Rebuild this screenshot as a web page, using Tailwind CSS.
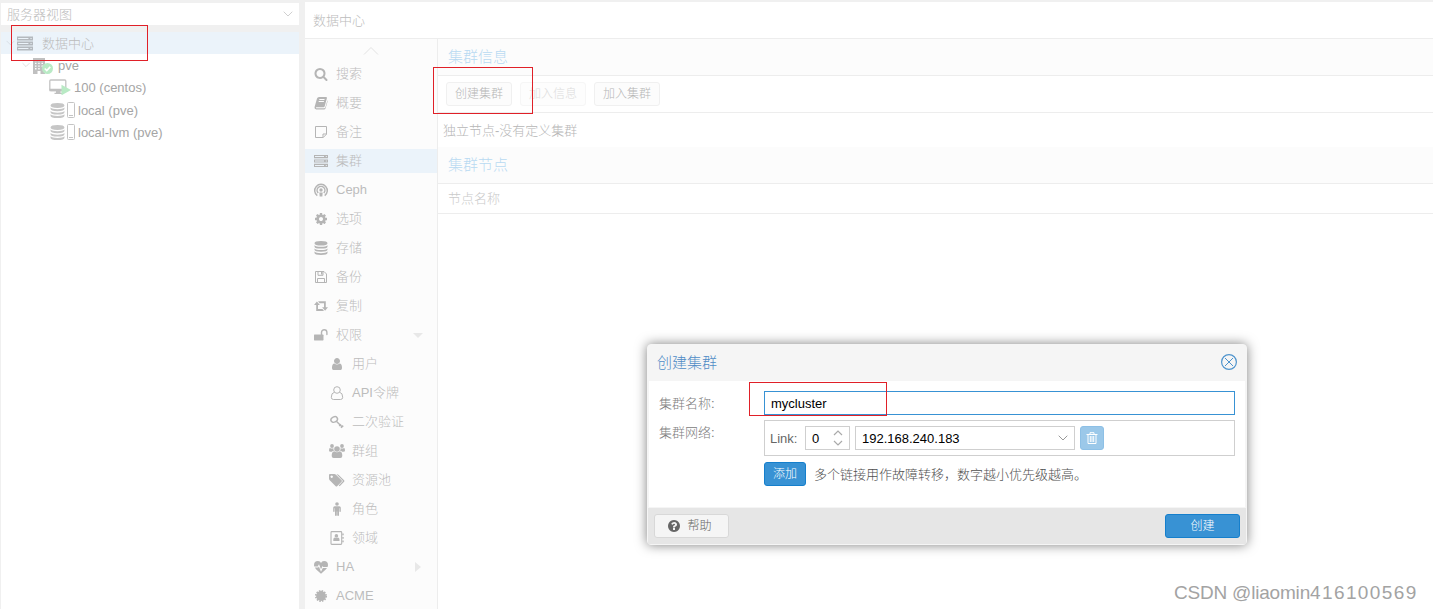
<!DOCTYPE html>
<html lang="zh-CN">
<head>
  <meta charset="UTF-8" />
  <meta name="viewport" content="width=device-width, initial-scale=1" />
  <title>数据中心</title>
  <script src="https://cdn.jsdelivr.net/npm/@tailwindcss/browser@4"></script>
</head>
<body class="relative h-screen overflow-hidden bg-[#f0f0f0] font-['Liberation_Sans','Noto_Sans_CJK_SC',sans-serif] text-[13px] leading-none font-light text-[#bcbcbc]">

  <!-- icon sprite -->
  <svg class="hidden">
    <symbol id="search" viewBox="0 0 1792 1792"><path d="M1216 832q0-185-131.5-316.5t-316.5-131.5-316.5 131.5-131.5 316.5 131.5 316.5 316.5 131.5 316.5-131.5 131.5-316.5zm512 832q0 52-38 90t-90 38q-54 0-90-38l-343-342q-179 124-399 124-143 0-273.5-55.5t-225-150-150-225-55.5-273.5 55.5-273.5 150-225 225-150 273.5-55.5 273.5 55.5 225 150 150 225 55.5 273.5q0 220-124 399l343 343q37 37 37 90z"/></symbol>
    <symbol id="user" viewBox="0 0 1792 1792"><path d="M1536 1399q0 109-62.5 187t-150.5 78h-854q-88 0-150.5-78t-62.5-187q0-85 8.5-160.5t31.5-152 58.5-131 94-89 134.5-34.5q131 128 313 128t313-128q76 0 134.5 34.5t94 89 58.5 131 31.5 152 8.5 160.5zm-256-887q0 159-112.5 271.5t-271.5 112.5-271.5-112.5-112.5-271.5 112.5-271.5 271.5-112.5 271.5 112.5 112.5 271.5z"/></symbol>
    <symbol id="database" viewBox="0 0 14 14"><path d="M.5 2.300Q.5 0 7 0t6.500 2.300T7 4.600.5 2.300zM.5 4.200Q2 5.800 7 5.800t6.500-1.600v1.200Q13.500 7.600 7 7.600T.5 5.400zM.5 7.400Q2 9 7 9t6.500-1.600v1.200q0 2.200-6.500 2.200T.5 8.600zM.5 10.600Q2 12.200 7 12.200t6.500-1.600v1.200Q13.500 14 7 14T.5 11.800z"/></symbol>
    <symbol id="cog" viewBox="0 0 1792 1792"><path d="M1152 896q0-106-75-181t-181-75-181 75-75 181 75 181 181 75 181-75 75-181zm512-109v222q0 12-8 23t-20 13l-185 28q-19 54-39 91 35 50 107 138 10 12 10 25t-9 23q-27 37-99 108t-94 71q-12 0-26-9l-138-108q-44 23-91 38-16 136-29 186-7 28-36 28h-222q-14 0-24.5-8.5t-11.5-21.5l-28-184q-49-16-90-37l-141 107q-10 9-25 9-14 0-25-11-126-114-165-168-7-10-7-23 0-12 8-23 15-21 51-66.5t54-70.5q-27-50-41-99l-183-27q-13-2-21-12.5t-8-23.5v-222q0-12 8-23t19-13l186-28q14-46 39-92-40-57-107-138-10-12-10-24 0-10 9-23 26-36 98.5-107.5t94.5-71.5q13 0 26 10l138 107q44-23 91-38 16-136 29-186 7-28 36-28h222q14 0 24.5 8.5t11.5 21.5l28 184q49 16 90 37l142-107q9-9 24-9 13 0 25 10 129 119 165 170 7 8 7 22 0 12-8 23-15 21-51 66.5t-54 70.5q26 50 41 98l183 28q13 2 21 12.5t8 23.5z"/></symbol>
    <symbol id="question" viewBox="0 0 1792 1792"><path d="M1024 1376v-192q0-14-9-23t-23-9h-192q-14 0-23 9t-9 23v192q0 14 9 23t23 9h192q14 0 23-9t9-23zm256-672q0-88-55.5-163t-138.5-116-170-41q-243 0-371 213-15 24 8 42l132 100q7 6 19 6 16 0 25-12 53-68 86-92 34-24 86-24 48 0 85.5 26t37.500 59q0 38-20 61t-68 45q-63 28-115.5 86.5t-52.500 125.500v36q0 14 9 23t23 9h192q14 0 23-9t9-23q0-19 21.500-49.500t54.500-49.500q32-18 49-28.500t46-35 44.500-48 28-60.500 12.500-81zm384 192q0 209-103 385.500t-279.500 279.500-385.500 103-385.500-103-279.500-279.500-103-385.500 103-385.500 279.500-279.500 385.500-103 385.500 103 279.500 279.500 103 385.500z"/></symbol>
    <symbol id="book" viewBox="0 0 14 14"><path d="M5 1h7q1.200 0 .9 1.200L10.700 10.300q-.3.900-1.300.9H2.500q-.8 0-.6.500t.9.500H10.200q.8 0 1.100-.8L13.600 4V5.500l-2 6.700q-.4 1.300-1.700 1.300H2.300Q.3 13.300.5 11.300L3 2.500Q3.500 1 5 1z"/><path d="M5.300 3.500h5.200M4.700 5.500h5.200" stroke="#fcfcfc"/></symbol>
    <symbol id="note" viewBox="0 0 14 14"><path d="M1.500 1.500h11v7.700l-3.300 3.300H1.500zM12.500 9H9v3.500" fill="none" stroke="currentColor"/></symbol>
    <symbol id="server" viewBox="0 0 14 14"><path fill-rule="evenodd" d="M0 1h14v3.200H0zM1 2.100v1h9v-1zM11.800 2.100v1h1v-1zM0 5.400h14v3.200H0zM1 6.500v1h9v-1zM11.800 6.500v1h1v-1zM0 9.800h14V13H0zM1 10.900v1h9v-1zM11.800 10.900v1h1v-1z"/></symbol>
    <symbol id="ceph" viewBox="0 0 14 14"><g fill="none" stroke="currentColor" stroke-width="1.500"><path d="M3.300 12.700A6.300 6.300 0 1 1 10.700 12.700M4.200 10A3.900 3.900 0 1 1 9.800 10"/></g><circle cx="7" cy="7" r="1.700"/><path d="M5.300 9.500h3.400L8.300 13.500H5.700z"/></symbol>
    <symbol id="save" viewBox="0 0 14 14"><path d="M1.500 1.500h8.500l2.500 2.500v8.500h-11zM4 1.500v3.800h5V1.500M3.500 12.500V8.500h7v4" fill="none" stroke="currentColor"/><path d="M7 2h1.500v2.500H7z"/></symbol>
    <symbol id="retweet" viewBox="0 0 14 14"><path d="M2.900 2.500 5.900 6H4v4h4.500l1.500 1.900H2.200V6H0zM11.100 11.700 8.100 8.200H10v-4H5.500L4 2.300h7.800v5.900H14z"/></symbol>
    <symbol id="unlock" viewBox="0 0 14 14"><path d="M.5 6.500h8.300q.7 0 .7.700v4.600q0 .7-.7.700H.5q-.5 0-.5-.7V7.200q0-.7.500-.7z"/><path d="M7.500 6.700V4.500a2.700 2.700 0 0 1 5.400 0v2" fill="none" stroke="currentColor" stroke-width="1.400" stroke-linecap="round"/></symbol>
    <symbol id="user-o" viewBox="0 0 14 14"><g fill="none" stroke="currentColor"><circle cx="7" cy="4" r="3.300"/><path d="M4.300 6.300Q1.300 6.800 1.300 11.300 1.300 13.500 3.500 13.500h7q2.200 0 2.200-2.200 0-4.500-3-5"/></g></symbol>
    <symbol id="key" viewBox="0 0 14 14"><g fill="none" stroke="currentColor" stroke-width="1.500"><ellipse cx="4.200" cy="4.500" rx="3.400" ry="2.600" transform="rotate(-25 4.200 4.500)"/><path d="M6.300 6.300 12.300 12M9.200 11l1.700-1.700M11 12.800l2.200-2.200"/></g></symbol>
    <symbol id="users" viewBox="0 0 16 14"><circle cx="8" cy="5" r="2.800"/><path d="M5.300 7.300Q8 9.400 10.700 7.300 13.300 7.600 13.300 12q0 2-2 2H4.700q-2 0-2-2 0-4.400 2.600-4.700z"/><circle cx="3" cy="2" r="1.900"/><circle cx="13" cy="2" r="1.900"/><path d="M1 4q1.800 1 3.300 0 0 1.500.7 2.700-1.200 0-2.200 1H1.500Q0 7.700 0 6.400 0 4 1 4zM15 4q-1.800 1-3.300 0 0 1.500-.7 2.700 1.200 0 2.200 1h1.300Q16 7.700 16 6.400 16 4 15 4z"/></symbol>
    <symbol id="tags" viewBox="0 0 16 14"><path fill-rule="evenodd" d="M0 2q0-1 1-1h4.300q1 0 1.700.7l5.600 5.600q.7.700 0 1.400l-4.500 4.500q-.7.700-1.400 0L.7 7.300Q0 6.600 0 5.600zM2.700 2.500a1.200 1.200 0 1 0 .01 0z"/><path d="M8 1.200q1 0 1.700.7l5.400 5.400q.7.700 0 1.400l-4.400 4.600-1-.8L14 8 7.500 1.200z"/></symbol>
    <symbol id="male" viewBox="0 0 14 14"><circle cx="7" cy="2" r="1.800"/><path d="M4.700 4.200h4.600q1.500 0 1.500 1.500v3.500q0 .7-.7.700t-.7-.7V6.200H9V13q0 .9-.9.900t-.9-.9V9.500h-.4V13q0 .9-.9.900T5 13V6.200h-.4v3q0 .7-.7.700t-.7-.7V5.700q0-1.500 1.500-1.500z"/></symbol>
    <symbol id="address" viewBox="0 0 14 14"><rect x="1" y=".6" width="10.700" height="12.800" rx=".8" fill="none" stroke="currentColor" stroke-width="1.100"/><circle cx="6.400" cy="4.900" r="1.800"/><path d="M3.300 10V8.500Q3.300 6.600 5 6.600q1.400 1 2.800 0 1.700 0 1.700 1.900V10zM12.300 2.500h1.400v1.800h-1.400zM12.300 6h1.400v1.800h-1.400zM12.300 9.500h1.400v1.800h-1.400z"/></symbol>
    <symbol id="heart" viewBox="0 0 14 14"><path d="M7 3Q6.300 1 4 1 0 1 0 5q0 .8.300 1.500h3.400L5 4.200 7 9.300 8.600 6l.6 1h4.300Q14 6 14 5q0-4-4-4Q7.700 1 7 3z"/><path d="M1 7.500h3.200l.7-1L7 11.700 8.700 8.200l.2-.2H13q-.5.800-1.500 1.700L7 13.700 2.500 9.700Q1.500 8.800 1 7.500z"/></symbol>
    <symbol id="cert" viewBox="0 0 14 14"><circle cx="7" cy="7" r="4.900"/><circle cx="7" cy="7" r="5.200" fill="none" stroke="currentColor" stroke-width="1.700" stroke-dasharray="1.500 1.222"/></symbol>
    <symbol id="building" viewBox="0 0 12 16"><path fill-rule="evenodd" d="M0 0h12v16H7.500v-3h-3v3H0zM2 2v1.300h1.500V2zM5.200 2v1.300h1.500V2zM8.500 2v1.300H10V2zM2 4.700V6h1.500V4.700zM5.200 4.700V6h1.500V4.700zM8.500 4.700V6H10V4.700zM2 7.400v1.300h1.500V7.400zM5.200 7.400v1.300h1.500V7.400zM8.500 7.400v1.300H10V7.400zM2 10.100v1.300h1.500v-1.300zM5.200 10.100v1.300h1.500v-1.300z"/></symbol>
    <symbol id="chevron" viewBox="0 0 10 6"><path d="M.7.7 5 5 9.300.7" fill="none" stroke="currentColor"/></symbol>
  </svg>

  <div class="flex h-full pt-0.5">

    <!-- resource tree -->
    <aside class="ml-px flex w-[298px] flex-col pt-px">
      <div class="flex h-[22px] items-center justify-between bg-white pr-1.5 pl-1.5">
        <span>服务器视图</span>
        <svg class="h-1.5 w-2.5 text-[#d0d0d0]"><use href="#chevron"/></svg>
      </div>
      <div class="mt-[7px] flex-1 bg-white">
        <div class="flex h-[22px] items-center bg-[#ebf3fa] pl-[5px]">
          <svg class="mr-0.5 h-1.5 w-[9px] text-[#d5dde3]"><use href="#chevron"/></svg>
          <svg class="mr-[9px] h-[15px] w-4 fill-current text-[#b4b9be]" viewBox="0 0 14 14" preserveAspectRatio="none"><path fill-rule="evenodd" d="M0 .5h14v3.600H0zM1 1.800v1h9v-1zM11.800 1.800v1h1v-1zM0 5.200h14v3.600H0zM1 6.500v1h9v-1zM11.800 6.500v1h1v-1zM0 9.900h14v3.600H0zM1 11.200v1h9v-1zM11.800 11.200v1h1v-1z"/></svg>
          <span>数据中心</span>
        </div>
        <div class="flex h-[22px] items-center pl-[21px] text-[#a5a5a5]">
          <svg class="mr-[3px] h-1.5 w-2 text-[#d8d8d8]"><use href="#chevron"/></svg>
          <span class="relative mt-0.5 mr-[11px] h-4 w-3.5 text-[#c0c0c0]">
            <svg class="h-4 w-3 fill-current"><use href="#building"/></svg>
            <svg class="absolute top-[5px] left-[9px] size-[11px]" viewBox="0 0 12 12"><circle cx="6" cy="6" r="6" fill="#b9eac5"/><path d="m3 6 2.200 2.300L9 4.300" fill="none" stroke="#fff" stroke-width="1.800"/></svg>
          </span>
          <span>pve</span>
        </div>
        <div class="flex h-[22px] items-center pl-12 text-[#a5a5a5]">
          <svg class="mr-[3px] h-4 w-[22px]" viewBox="0 0 22 16"><rect x=".8" y="1" width="16" height="10.500" rx="1" fill="none" stroke="#c4c4c4" stroke-width="1.300"/><path d="M.5 9.700h16.500v2.500H.5zM7 12h4.500v2H7zM5.500 13.700H14V15H5.500z" fill="#c0c0c0"/><path d="m12.500 5.700 9.500 5.300-9.500 5.300z" fill="#b9eac5"/></svg>
          <span>100 (centos)</span>
        </div>
        <div class="flex h-[23px] items-center pt-px pl-[49px] text-[#a5a5a5]">
          <svg class="size-[15px] fill-current text-[#c6c6c6]"><use href="#database"/></svg>
          <svg class="mr-[3px] ml-0.5 h-4 w-2" viewBox="0 0 8 16"><rect x=".5" y=".5" width="7" height="15" rx="1" fill="none" stroke="#c4c4c4"/><path d="M2 13.500h4" stroke="#c4c4c4"/></svg>
          <span>local (pve)</span>
        </div>
        <div class="flex h-[22px] items-center pl-[49px] text-[#a5a5a5]">
          <svg class="size-[15px] fill-current text-[#c6c6c6]"><use href="#database"/></svg>
          <svg class="mr-[3px] ml-0.5 h-4 w-2" viewBox="0 0 8 16"><rect x=".5" y=".5" width="7" height="15" rx="1" fill="none" stroke="#c4c4c4"/><path d="M2 13.500h4" stroke="#c4c4c4"/></svg>
          <span>local-lvm (pve)</span>
        </div>
      </div>
    </aside>

    <!-- datacenter panel -->
    <section class="ml-1.5 flex flex-1 flex-col bg-white">
      <div class="flex h-[37px] shrink-0 items-center border-b border-[#ededed] pl-2">数据中心</div>
      <div class="flex min-h-0 flex-1">

        <nav class="w-[133px] shrink-0 overflow-hidden border-r border-[#ededed] bg-[#fcfcfc]">
          <div class="flex h-[23px] items-center justify-center">
            <svg class="h-2 w-4 text-[#e2e2e2]" viewBox="0 0 16 8"><path d="m1 7.500 7-7 7 7" fill="none" stroke="currentColor"/></svg>
          </div>
          <ul id="nav"></ul>
        </nav>

        <main class="flex-1">
          <h2 class="flex h-[37px] items-center border-b border-[#ededed] bg-[#fcfcfc] pb-0.5 pl-2.5 text-[15px] text-[#b9daf2]">集群信息</h2>
          <div class="flex h-[37px] items-center gap-2 border-b border-[#ededed] pl-2 text-xs">
            <button class="h-6 w-[66px] rounded-[3px] border border-[#f0f0f0] bg-[#fcfcfc] text-[#b6b6b6]">创建集群</button>
            <button class="h-6 w-[66px] rounded-[3px] border border-[#f6f6f6] bg-[#fdfdfd] text-[#dcdcdc]">加入信息</button>
            <button class="h-6 w-[66px] rounded-[3px] border border-[#f0f0f0] bg-[#fcfcfc] text-[#b6b6b6]">加入集群</button>
          </div>
          <p class="flex h-[34px] items-center pl-[5px] text-[#b6b6b6]">独立节点-没有定义集群</p>
          <h2 class="flex h-[37px] items-center border-b border-[#ededed] bg-[#fcfcfc] pb-0.5 pl-2.5 text-[15px] text-[#b9daf2]">集群节点</h2>
          <div class="flex h-[30px] items-center border-b border-[#ededed] pl-2.5 text-[#cacaca]">节点名称</div>
        </main>
      </div>
    </section>
  </div>

  <!-- create cluster dialog -->
  <div class="absolute top-[344px] left-[647px] flex h-[201px] w-[600px] flex-col rounded-[4px] border border-[#f5f5f5] bg-[#f5f5f5] text-[#666] shadow-[0_0_12px_rgba(0,0,0,0.5)]">
    <div class="flex h-9 items-center justify-between pr-[9px] pb-0.5 pl-[9px] text-[15px] text-[#4f8cc6]">
      <h3>创建集群</h3>
      <svg class="size-4" viewBox="0 0 16 16" fill="none" stroke="#4f94cd"><circle cx="8" cy="8" r="7.400" stroke-width="1.200"/><path d="m4 4 8 8M12 4l-8 8"/></svg>
    </div>
    <form class="mx-px flex h-[126px] flex-col bg-white pt-2.5 pr-[10px] pl-2.5">
      <div class="flex">
        <label class="flex h-6 w-[105px] items-center text-[#808080]">集群名称:</label>
        <div class="flex h-6 flex-1 items-center border border-[#3892d4] px-1.5 text-black">mycluster</div>
      </div>
      <div class="mt-[5px] flex">
        <label class="flex h-6 w-[105px] items-center text-[#808080]">集群网络:</label>
        <div class="flex h-9 flex-1 items-center border border-[#cfcfcf] pl-[5px]">
          <span class="w-[35px]">Link:</span>
          <div class="flex h-6 w-[45px] items-center justify-between border border-[#cfcfcf] pr-1.5 pl-1.5 text-black">0
            <svg class="h-4 w-2.5" viewBox="0 0 10 16" fill="none" stroke="#aaa" stroke-width="1.200"><path d="m1 5 4-4 4 4M1 11l4 4 4-4"/></svg>
          </div>
          <div class="ml-[5px] flex h-6 w-[220px] items-center justify-between border border-[#cfcfcf] pr-1.5 pl-1.5 text-black">192.168.240.183
            <svg class="h-1.5 w-2.5 text-[#999]"><use href="#chevron"/></svg>
          </div>
          <button class="ml-[5px] flex size-6 items-center justify-center rounded-[3px] border border-[#8dc0e6] bg-[#9bc8e9]">
            <svg class="size-3" viewBox="0 0 12 12" fill="none" stroke="#fff"><path d="M.5 2.500h11M4 2.300V.7h4v1.600M2 2.500v9h8v-9M4.300 4v6M6 4v6M7.700 4v6"/></svg>
          </button>
        </div>
      </div>
      <div class="mt-1.5 ml-[105px] flex items-center gap-2">
        <button class="h-6 w-[42px] rounded-[3px] border border-[#157fcc] bg-[#3892d4] text-xs text-white">添加</button>
        <span class="text-[#505050]">多个链接用作故障转移，数字越小优先级越高。</span>
      </div>
    </form>
    <div class="mt-px flex flex-1 items-center justify-between bg-[#e6e6e6] pr-1.5 pl-1.5 text-xs">
      <button class="flex h-6 w-[75px] items-center justify-center gap-1.5 rounded-[3px] border border-[#d8d8d8] bg-[#f5f5f5] pr-1">
        <svg class="size-3.5 fill-current"><use href="#question"/></svg>帮助
      </button>
      <button class="h-6 w-[75px] rounded-[3px] border border-[#157fcc] bg-[#3892d4] text-white">创建</button>
    </div>
  </div>

  <!-- highlight frames -->
  <div class="absolute top-[25px] left-[11px] h-9 w-[137px] border border-[#e02028]"></div>
  <div class="absolute top-[67px] left-[433px] h-[47px] w-[100px] border border-[#e02028]"></div>
  <div class="absolute top-[382px] left-[749px] h-[34px] w-[138px] border border-[#e02028]"></div>

  <div class="absolute bottom-[7px] left-[1174px] text-[19px] tracking-[-0.2px] whitespace-nowrap text-[#a3a3a3]">CSDN @liaomin<span class="tracking-[1.4px]">416100569</span></div>

  <script>
    // [icon, label, nested, expander]
    const items = [
      ['search', '搜索'],
      ['book', '概要'],
      ['note', '备注'],
      ['server', '集群'],
      ['ceph', 'Ceph'],
      ['cog', '选项'],
      ['database', '存储'],
      ['save', '备份'],
      ['retweet', '复制'],
      ['unlock', '权限', false, 'down'],
      ['user', '用户', true],
      ['user-o', 'API令牌', true],
      ['key', '二次验证', true],
      ['users', '群组', true],
      ['tags', '资源池', true],
      ['male', '角色', true],
      ['address', '领域', true],
      ['heart', 'HA', false, 'right'],
      ['cert', 'ACME']
    ];
    const arrows = {
      down: '<svg class="mr-3.5 ml-auto h-[5px] w-2.5" viewBox="0 0 10 5"><path d="M0 0h10L5 5z" fill="#e8e8e8"/></svg>',
      right: '<svg class="mr-4 ml-auto h-2.5 w-[6px]" viewBox="0 0 6 10"><path d="M0 0v10l6-5z" fill="#e8e8e8"/></svg>'
    };

    document.getElementById('nav').innerHTML = items.map(([icon, label, nested, arrow]) => `
      <li class="mb-[5px] flex h-6 items-center ${nested ? 'pl-6' : 'pl-2'} ${label === '集群' ? 'bg-[#ebf3fa]' : ''}">
        <svg class="mr-[7px] h-3.5 w-4 fill-current text-[#b5b5b5]"><use href="#${icon}"/></svg>
        <span class="mb-0.5">${label}</span>${arrows[arrow] || ''}
      </li>`).join('');
  </script>
</body>
</html>
